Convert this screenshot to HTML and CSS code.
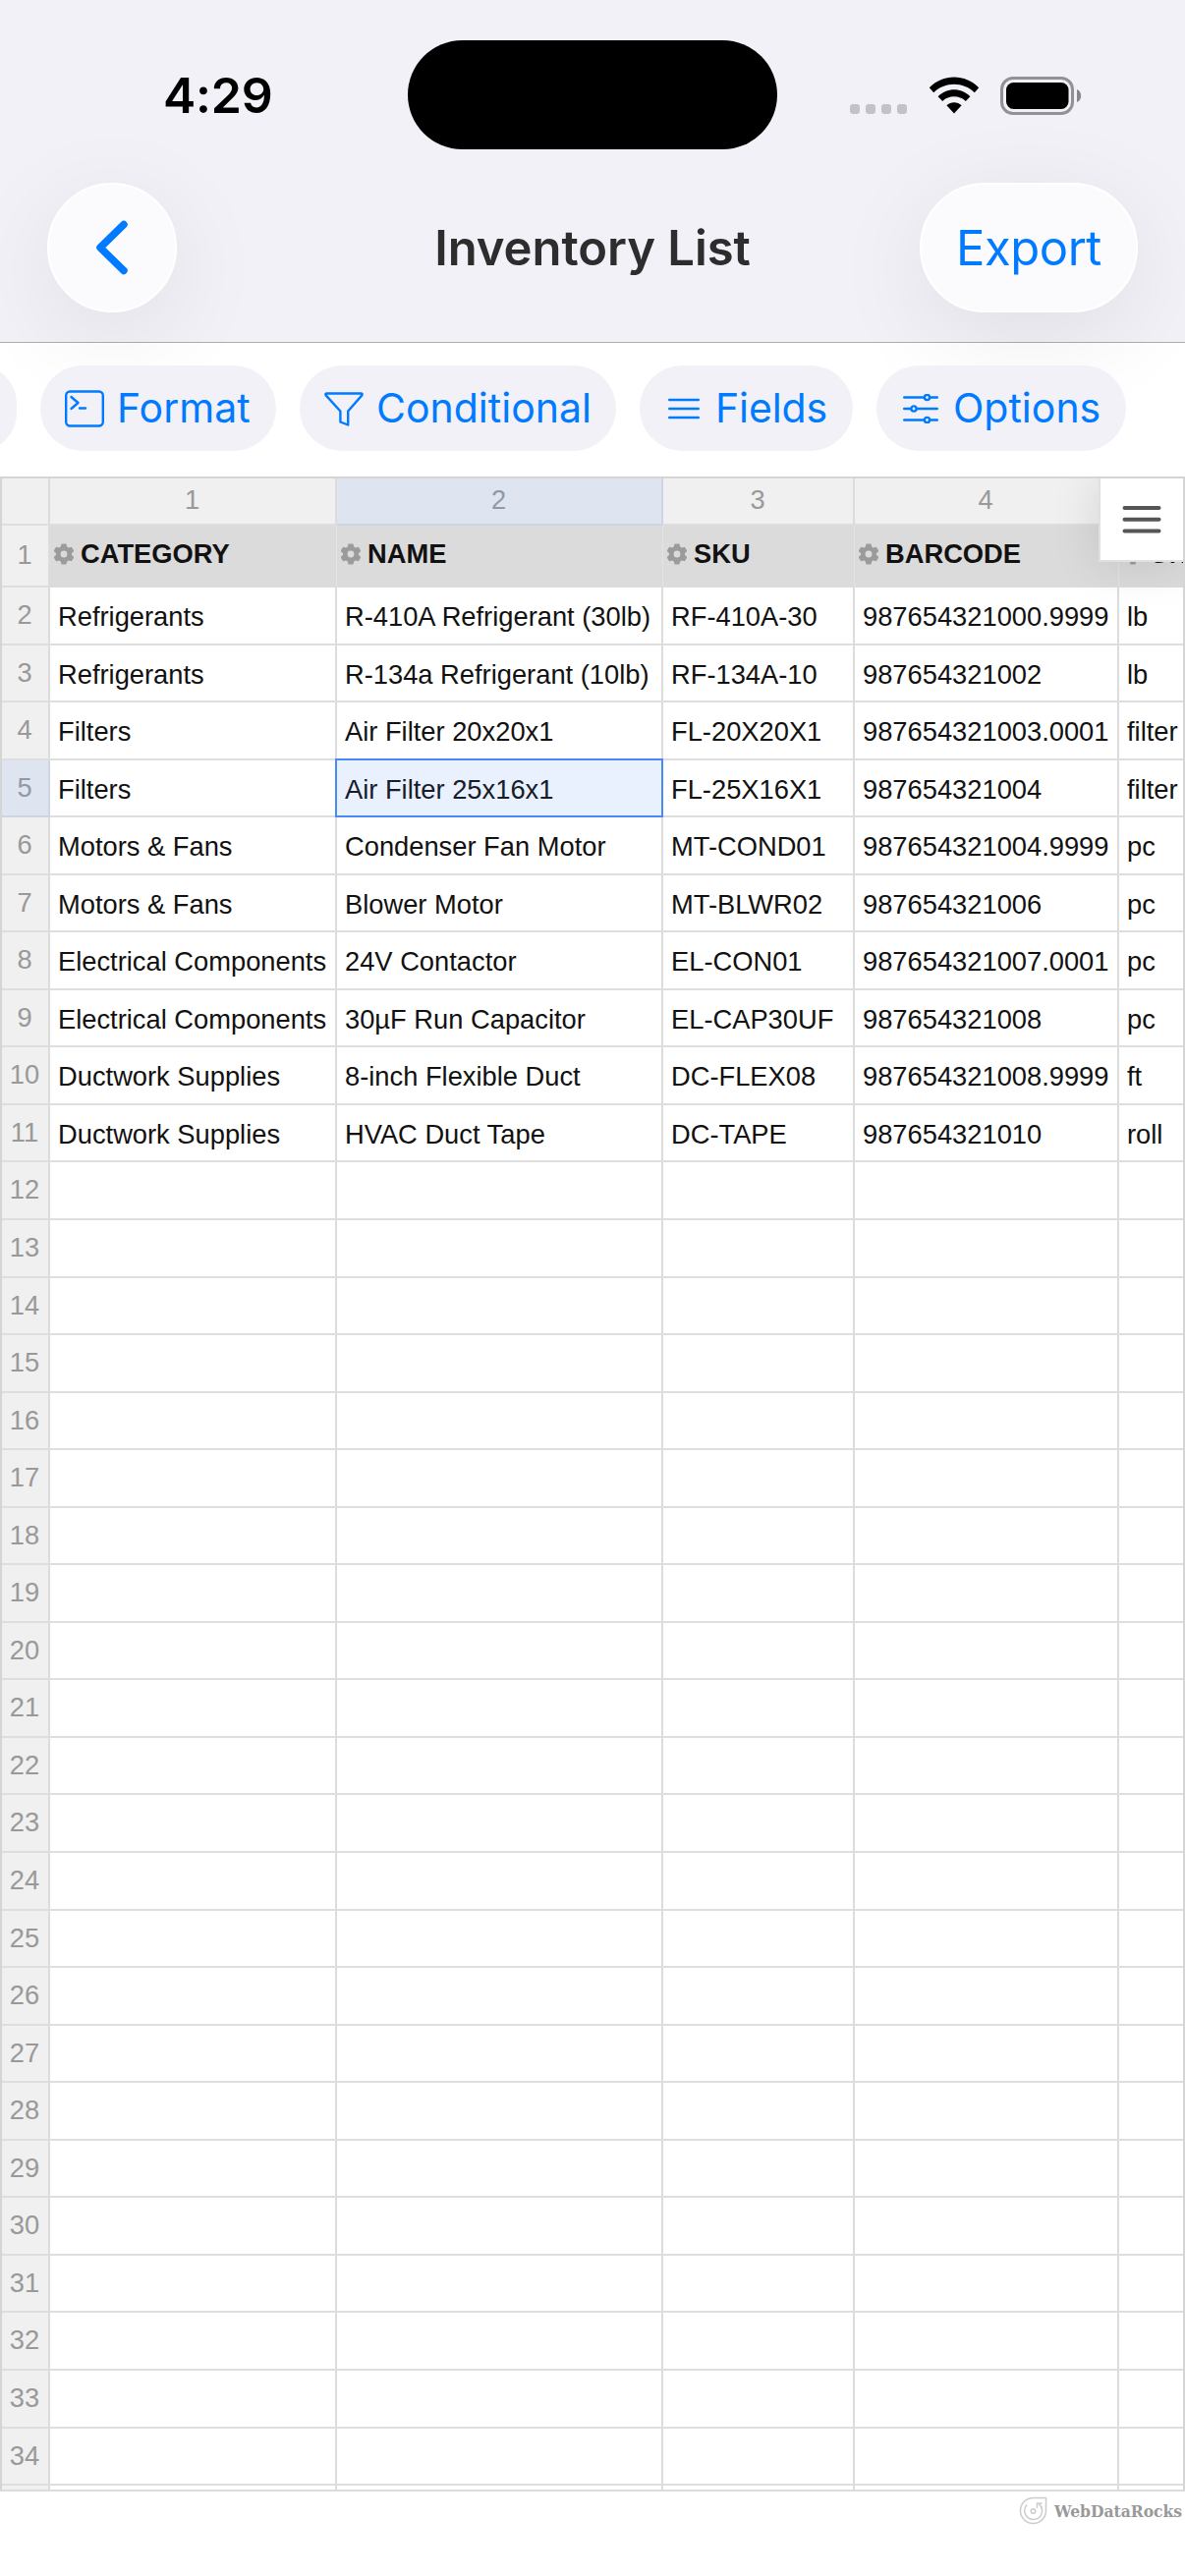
FILE: index.html
```html
<!DOCTYPE html>
<html lang="en">
<head>
    <meta charset="UTF-8">
    <meta name="viewport" content="width=device-width, initial-scale=1.0">
    <title>Inventory List</title>
    <link rel="stylesheet" href="styles.css">
</head>
<body>
    <div class="top">
        <div class="status-bar">
            <div class="time">4:29</div>
            <div class="island"></div>
            <div class="status-icons">
                <div class="dots"><i></i><i></i><i></i><i></i></div>
                <svg class="wifi" width="52" height="38" viewBox="0 0 52 38">
                    <path d="M0.8 11.2C14.5 -3.2 37.5 -3.2 51.2 11.2L46.8 16.2C35.5 4.8 16.5 4.8 5.2 16.2Z"/>
                    <path d="M9.6 20.2C18.8 10.9 33.2 10.9 42.4 20.2L37.8 25C31.4 18.8 20.6 18.8 14.2 25Z"/>
                    <path d="M18.4 29.2C22.6 25.2 29.4 25.2 33.6 29.2L26 37.6Z"/>
                </svg>
                <svg class="battery" width="83" height="39" viewBox="0 0 83 39">
                    <rect x="1.5" y="1.5" width="72" height="36" rx="11.5" fill="none" stroke="#929196" stroke-width="3"/>
                    <rect x="6" y="6" width="63.5" height="27" rx="7.5"/>
                    <path d="M78 13c5.500 2 5.500 11 0 13z" fill="#87868a"/>
                </svg>
            </div>
        </div>
        <div class="nav-bar">
            <button class="nav-button back">
                <svg width="40" height="62" viewBox="0 0 40 62" fill="none" stroke="#007aff" stroke-width="7.500" stroke-linecap="round" stroke-linejoin="round"><path d="M32 7.500L8 31L32 54.500"/></svg>
            </button>
            <h1>Inventory List</h1>
            <button class="nav-button export"><span>Export</span></button>
        </div>
    </div>

    <div class="toolbar">
        <button class="pill clipped"></button>
        <button class="pill format">
            <svg width="40" height="38" viewBox="0 0 40 38"><rect x="1.200" y="1.500" width="37.600" height="35" rx="4"/><path d="M6.500 7l7 6-7 6M15 18.500h6"/></svg>
            <span>Format</span>
        </button>
        <button class="pill conditional">
            <svg width="40" height="36" viewBox="0 0 40 36"><path d="M2.500 2.500h35c1 0 1.500 1 .8 1.900L24.200 20.500v14l-7.800-3v-11L1.700 4.400c-.7-.9-.2-1.900.8-1.900z"/></svg>
            <span>Conditional</span>
        </button>
        <button class="pill fields">
            <svg width="32" height="22" viewBox="0 0 32 22"><path d="M1.200 2h29.600M1.200 11h29.600M1.200 20h29.600"/></svg>
            <span>Fields</span>
        </button>
        <button class="pill options">
            <svg width="36" height="30" viewBox="0 0 36 30"><path d="M1.200 3.500h20M27.500 3.500h7.300M1.200 15h6.500M14 15h20.800M1.200 26.500h20M27.500 26.500h7.300"/><circle cx="24.500" cy="3.500" r="2.600"/><circle cx="11" cy="15" r="2.600"/><circle cx="24.500" cy="26.500" r="2.600"/></svg>
            <span>Options</span>
        </button>
    </div>

    <div class="grid-wrap">
        <div class="grid" id="grid"></div>
        <div class="menu-button">
            <svg width="40" height="30" viewBox="0 0 40 30"><path d="M2.500 3h35M2.500 14.700h35M2.500 26.500h35"/></svg>
        </div>
    </div>

    <div class="credits">
        <svg width="29" height="29" viewBox="0 0 29 29"><path d="M27.500 1.500V14.500A13 13 0 1 1 14.500 1.500Z"/><path d="M8 8.500a9 9 0 1 0 12-1.200"/><path d="M18.500 12V7h5"/><circle cx="14.500" cy="15" r="2.300"/></svg>
        <span>WebDataRocks</span>
    </div>

    <script>
        const headers = ['CATEGORY', 'NAME', 'SKU', 'BARCODE', 'UNIT'];
        const items = [
            ['Refrigerants', 'R-410A Refrigerant (30lb)', 'RF-410A-30', '987654321000.9999', 'lb'],
            ['Refrigerants', 'R-134a Refrigerant (10lb)', 'RF-134A-10', '987654321002', 'lb'],
            ['Filters', 'Air Filter 20x20x1', 'FL-20X20X1', '987654321003.0001', 'filter'],
            ['Filters', 'Air Filter 25x16x1', 'FL-25X16X1', '987654321004', 'filter'],
            ['Motors &amp; Fans', 'Condenser Fan Motor', 'MT-COND01', '987654321004.9999', 'pc'],
            ['Motors &amp; Fans', 'Blower Motor', 'MT-BLWR02', '987654321006', 'pc'],
            ['Electrical Components', '24V Contactor', 'EL-CON01', '987654321007.0001', 'pc'],
            ['Electrical Components', '30µF Run Capacitor', 'EL-CAP30UF', '987654321008', 'pc'],
            ['Ductwork Supplies', '8-inch Flexible Duct', 'DC-FLEX08', '987654321008.9999', 'ft'],
            ['Ductwork Supplies', 'HVAC Duct Tape', 'DC-TAPE', '987654321010', 'roll']
        ];
        const rowCount = 34;
        const selected = { row: 5, col: 2 };

        const gear = `<svg class="gear" width="20" height="22" viewBox="-10 -11 20 22">
            <circle r="5.700" fill="none" stroke="#9b9b9b" stroke-width="4.600"/>
            ${[0, 60, 120, 180, 240, 300].map(a => `<path d="M-3.500 -6.500L-2.400 -10.500H2.400L3.500 -6.500Z" transform="rotate(${a})" fill="#9b9b9b"/>`).join('')}
        </svg>`;

        function cell(cls, content) {
            return `<div class="cell ${cls}">${content}</div>`;
        }

        // Sheet column numbers
        let html = '<div class="row numbers">' + cell('num', '');
        headers.forEach((h, i) => {
            html += cell('num' + (i + 1 === selected.col ? ' active' : ''), i < 4 ? i + 1 : '');
        });
        html += '</div>';

        // Field captions
        html += '<div class="row captions">' + cell('num', 1);
        headers.forEach(h => {
            html += cell('caption', gear + `<span>${h}</span>`);
        });
        html += '</div>';

        // Data rows, then empty ones down to the edge; the last is only a sliver
        for (let r = 2; r <= rowCount + 1; r++) {
            const item = items[r - 2] || ['', '', '', '', ''];
            html += '<div class="row">' + cell('num' + (r === selected.row ? ' active' : ''), r <= rowCount ? r : '');
            item.forEach((value, i) => {
                const isSelected = r === selected.row && i + 1 === selected.col;
                html += cell(isSelected ? 'selected' : '', value);
            });
            html += '</div>';
        }
        document.getElementById('grid').innerHTML = html;
    </script>
</body>
</html>
```
FILE: styles.css
```css
* {
    box-sizing: border-box;
}
body {
    margin: 0;
    width: 1206px;
    height: 2622px;
    overflow: hidden;
    background: #fff;
    font-family: Inter, "Liberation Sans", sans-serif;
}
button {
    border: none;
    margin: 0;
    padding: 0;
    font-family: inherit;
    color: #007aff;
}
.top {
    height: 349px;
    background: #f2f1f7;
    border-bottom: 1px solid #adadb1;
}
.status-bar {
    display: flex;
    height: 186px;
    padding-top: 41px;
}
.time {
    width: 415px;
    padding-left: 166px;
    padding-top: 26px;
    font-size: 50px;
    line-height: 61px;
    font-weight: 600;
    letter-spacing: -0.2px;
}
.island {
    width: 376px;
    height: 111px;
    border-radius: 56px;
    background: #000;
}
.status-icons {
    display: flex;
    align-items: flex-start;
    padding: 37px 0 0 74px;
}
.dots {
    display: flex;
    gap: 6px;
    padding-top: 28px;
}
.dots i {
    width: 10px;
    height: 10px;
    border-radius: 3px;
    background: #c3c2c7;
}
.wifi {
    margin-left: 22px;
}
.battery {
    margin-left: 21px;
}
.nav-bar {
    display: flex;
    justify-content: space-between;
    padding: 0 48px;
}
.nav-button {
    display: flex;
    align-items: center;
    justify-content: center;
    height: 132px;
    border: 2px solid #fff;
    border-radius: 66px;
    background: #fbfbfd;
    box-shadow: 0 22px 100px rgba(0, 0, 0, 0.08);
}
.back {
    width: 132px;
}
.export {
    width: 222px;
    font-size: 49px;
    letter-spacing: -0.5px;
}
.nav-bar h1 {
    margin: 0 0 0 90px;
    font-size: 49px;
    line-height: 134px;
    font-weight: 600;
    color: #2d2d2d;
    letter-spacing: -0.05px;
}
.toolbar {
    display: flex;
    gap: 24px;
    height: 136px;
    padding-top: 23px;
}
.pill {
    display: flex;
    align-items: center;
    height: 87px;
    border-radius: 44px;
    background: #f2f1f7;
    font-size: 41px;
    white-space: nowrap;
}
.pill span {
    padding-bottom: 2px;
}
.pill svg {
    flex: none;
    fill: none;
    stroke: #007aff;
    stroke-width: 2.4;
    stroke-linecap: round;
    stroke-linejoin: round;
}
.clipped {
    width: 77px;
    margin-left: -60px;
}
.format {
    width: 240px;
    padding-left: 25px;
    gap: 13px;
}
.conditional {
    width: 322px;
    padding-left: 25px;
    gap: 13px;
}
.fields {
    width: 217px;
    padding-left: 29px;
    gap: 16px;
    letter-spacing: -0.1px;
}
.options {
    width: 254px;
    padding-left: 27px;
    gap: 15px;
}
.grid-wrap {
    position: relative;
    height: 2051px;
    border: 2px solid #d5d5d5;
    border-bottom-color: #dcdcdc;
    overflow: hidden;
    font-family: "Liberation Sans", Arial, sans-serif;
    font-size: 27.3px;
    color: #111;
}
.row {
    display: grid;
    grid-template-columns: 49px 292px 332px 195px 269px 70px;
    height: 58.55px;
}
.row.numbers {
    height: 48px;
}
.row.captions {
    height: 63px;
}
.cell {
    padding: 2px 0 0 8px;
    border-right: 2px solid #dcdcdc;
    border-bottom: 2px solid #dedede;
    line-height: 56px;
    white-space: nowrap;
    overflow: hidden;
}
.num {
    padding: 0 1px 0 0;
    background: #f0f0f0;
    color: #999;
    text-align: center;
}
.numbers .cell {
    line-height: 43px;
}
.captions .num {
    line-height: 60px;
}
.num.active {
    background: #dee4f0;
    border-color: #cdd5e4;
    color: #9299a6;
}
.caption {
    display: flex;
    align-items: center;
    gap: 7px;
    padding: 0 0 3px 4px;
    background: #dbdbdb;
    border-right: 1px solid #e4e4e4;
    border-bottom-color: #dbdbdb;
    font-weight: bold;
    line-height: 58px;
}
.gear {
    flex: none;
}
.cell.selected {
    margin: -2px 0 0 -2px;
    padding: 4px 0 0 10px;
    background: #eaf1fe;
    box-shadow: inset 0 0 0 2px #4a8af4;
    border: none;
    color: #161c2a;
}
.menu-button {
    position: absolute;
    top: 0;
    right: 0;
    display: flex;
    align-items: center;
    justify-content: center;
    width: 86px;
    height: 85px;
    background: #fff;
    border: 2px solid #e0e0e0;
    border-top: none;
    border-right: none;
    box-shadow: 0 2px 50px rgba(0, 0, 0, 0.12);
}
.menu-button svg {
    stroke: #555;
    stroke-width: 4;
    stroke-linecap: round;
}
.credits {
    display: flex;
    justify-content: flex-end;
    align-items: center;
    gap: 7px;
    padding: 5px 3px 0 0;
    font-family: "Roboto Slab", "DejaVu Serif Condensed", "DejaVu Serif", serif;
    font-stretch: condensed;
    font-size: 17.3px;
    font-weight: bold;
    color: #999;
}
.credits svg {
    fill: none;
    stroke: #ccc;
    stroke-width: 1.5;
}
```
